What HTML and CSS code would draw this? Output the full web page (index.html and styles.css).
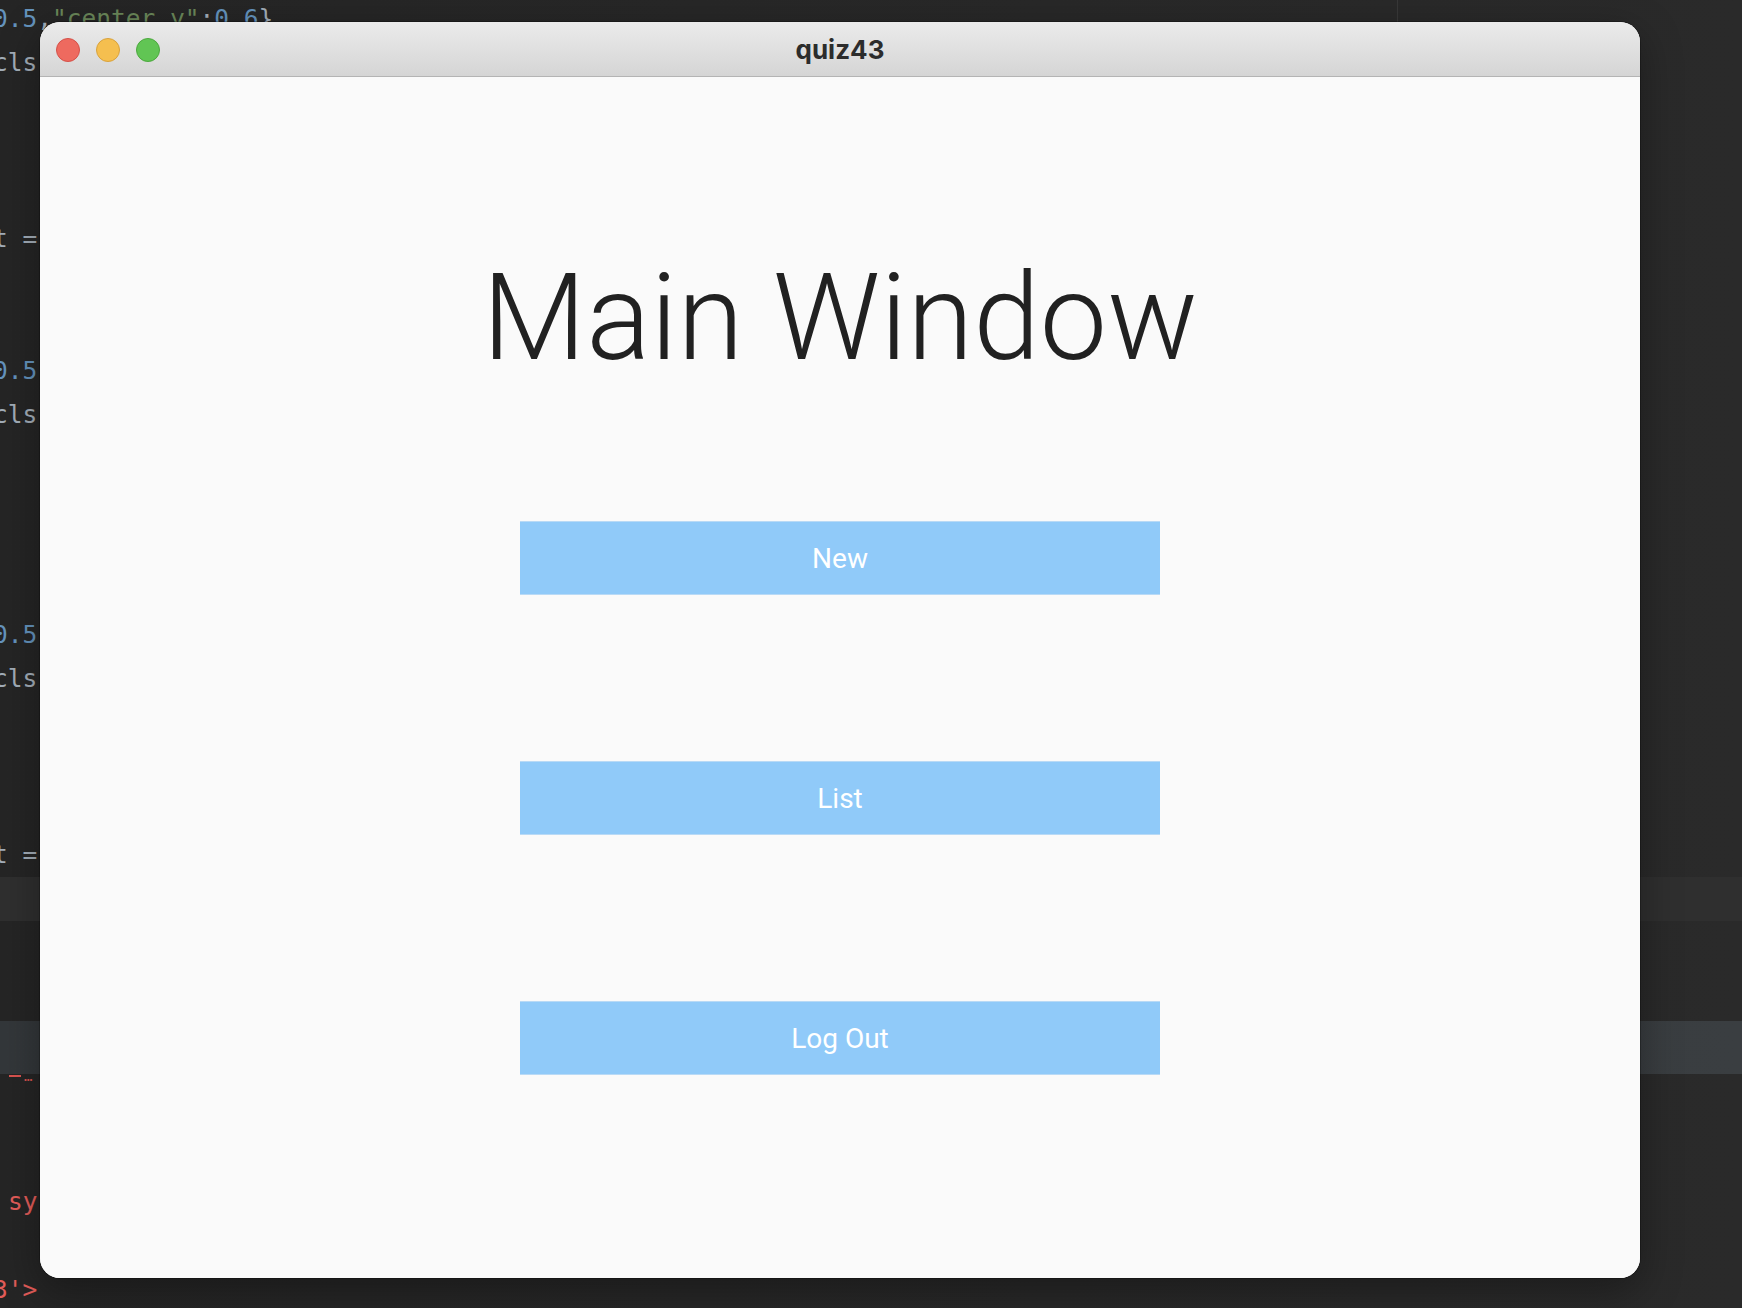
FILE: index.html
```html
<!DOCTYPE html>
<html lang="en">
<head>
<meta charset="utf-8">
<title>quiz43</title>
<link rel="stylesheet" href="styles.css">
</head>
<body>
<div class="editor">
  <div class="line"><span class="num">0.5</span><span class="pl">,</span><span class="str">"center_y"</span><span class="pl">:</span><span class="num">0.6</span><span class="pl">}</span></div>
  <div class="line"><span class="pl">cls</span></div>
  <div class="line"></div>
  <div class="line"></div>
  <div class="line"></div>
  <div class="line"><span class="pl">t =</span></div>
  <div class="line"></div>
  <div class="line"></div>
  <div class="line"><span class="num">0.5</span></div>
  <div class="line"><span class="pl">cls</span></div>
  <div class="line"></div>
  <div class="line"></div>
  <div class="line"></div>
  <div class="line"></div>
  <div class="line"><span class="num">0.5</span></div>
  <div class="line"><span class="pl">cls</span></div>
  <div class="line"></div>
  <div class="line"></div>
  <div class="line"></div>
  <div class="line"><span class="pl">t =</span></div>
  <div class="line current"></div>
  <div class="line"></div>
  <div class="selection"></div>
  <div class="squiggle"><span class="dash"></span><span class="dots">…</span></div>
  <div class="line red indent sy">sy</div>
  <div class="line red gap">3'&gt;</div>
</div>

<div class="window">
  <div class="titlebar">
    <div class="lights">
      <span class="light close"></span>
      <span class="light min"></span>
      <span class="light max"></span>
    </div>
    <div class="wtitle">quiz43</div>
  </div>
  <div class="content">
    <h1 class="heading">Main Window</h1>
    <button class="btn first">New</button>
    <button class="btn">List</button>
    <button class="btn">Log Out</button>
  </div>
</div>
</body>
</html>
```

FILE: styles.css
```css
html, body {
  margin: 0;
  padding: 0;
}
body {
  width: 1742px;
  height: 1308px;
  overflow: hidden;
  position: relative;
  background: #272727;
}

/* background code editor */
.editor {
  margin-top: -3px;
  height: 1311px;
  font-family: "DejaVu Sans Mono", "Liberation Mono", monospace;
  font-size: 24.5px;
  color: #a9b7c6;
  background:
    linear-gradient(to right, transparent 1397px, #383838 1397px, #383838 1398px, transparent 1398px) 0 0 / 100% 300px no-repeat,
    linear-gradient(to right, #252525, #2a2a2a);
}
.line {
  height: 44px;
  line-height: 44px;
  white-space: pre;
  text-indent: -7px;
}
.num { color: #6493bd; }
.str { color: #6a8759; }
.pl { color: #a2adb8; }
.current {
  background: #2f2f2f;
}
.selection {
  margin-top: 56px;
  height: 53px;
  background: linear-gradient(to right, #33373a, #3a3e41);
}
.squiggle {
  height: 10px;
  display: flex;
  align-items: flex-start;
  gap: 3px;
  padding-left: 9px;
}
.dash {
  display: block;
  width: 12px;
  height: 2px;
  background: #d9534f;
  margin-top: 1px;
}
.dots {
  color: #d9534f;
  font-size: 14px;
  line-height: 4px;
}
.red { color: #e25c59; }
.indent { text-indent: 8px; }
.sy { margin-top: 96px; }
.gap { margin-top: 44px; }

/* app window */
.window {
  position: absolute;
  left: 40px;
  top: 22px;
  width: 1600px;
  height: 1256px;
  border-radius: 20px;
  overflow: hidden;
  background: #fafafa;
  box-shadow: 0 12px 40px rgba(0, 0, 0, 0.35), 0 0 0 1px rgba(0, 0, 0, 0.25);
  display: flex;
  flex-direction: column;
}
.titlebar {
  height: 54px;
  flex: none;
  border-bottom: 1px solid #b4b4b4;
  background: linear-gradient(to bottom, #ebebeb, #d5d5d5);
  display: flex;
  align-items: center;
  justify-content: center;
  position: relative;
}
.lights {
  position: absolute;
  left: 16px;
  top: 16px;
  display: flex;
  gap: 16px;
}
.light {
  width: 22px;
  height: 22px;
  border-radius: 50%;
  display: block;
}
.close { background: #ee6a5f; border: 1px solid #d45149; }
.min { background: #f5bf4f; border: 1px solid #d8a23d; }
.max { background: #61c554; border: 1px solid #4ca83e; }
.wtitle {
  font-family: Inter, "Liberation Sans", sans-serif;
  font-weight: 700;
  font-size: 26px;
  color: #2c2c2c;
  margin-top: 1px;
}

.content {
  flex: 1;
  display: flex;
  flex-direction: column;
  align-items: center;
  background: #fafafa;
}
.heading {
  margin: 171px 0 0 0;
  height: 140px;
  line-height: 140px;
  font-family: Roboto, "Liberation Sans", sans-serif;
  font-weight: 300;
  font-size: 120px;
  letter-spacing: 0;
  color: #212121;
}
.btn {
  position: relative;
  width: 640px;
  height: 74px;
  margin-top: 166px;
  border: none;
  border-top: 1px solid #b9daf6;
  border-bottom: 1px solid #b9daf6;
  padding: 0;
  background: #90caf9;
  color: #ffffff;
  font-family: Roboto, "Liberation Sans", sans-serif;
  font-size: 28px;
  font-weight: 400;
  display: flex;
  align-items: center;
  justify-content: center;
}
.btn.first { margin-top: 133px; }
.btn::before {
  content: "";
  position: absolute;
  left: -68px;
  right: -68px;
  top: -4px;
  bottom: -6px;
  border-radius: 40px;
  background: rgba(0, 0, 0, 0.03);
  filter: blur(6px);
  z-index: -1;
}
```
